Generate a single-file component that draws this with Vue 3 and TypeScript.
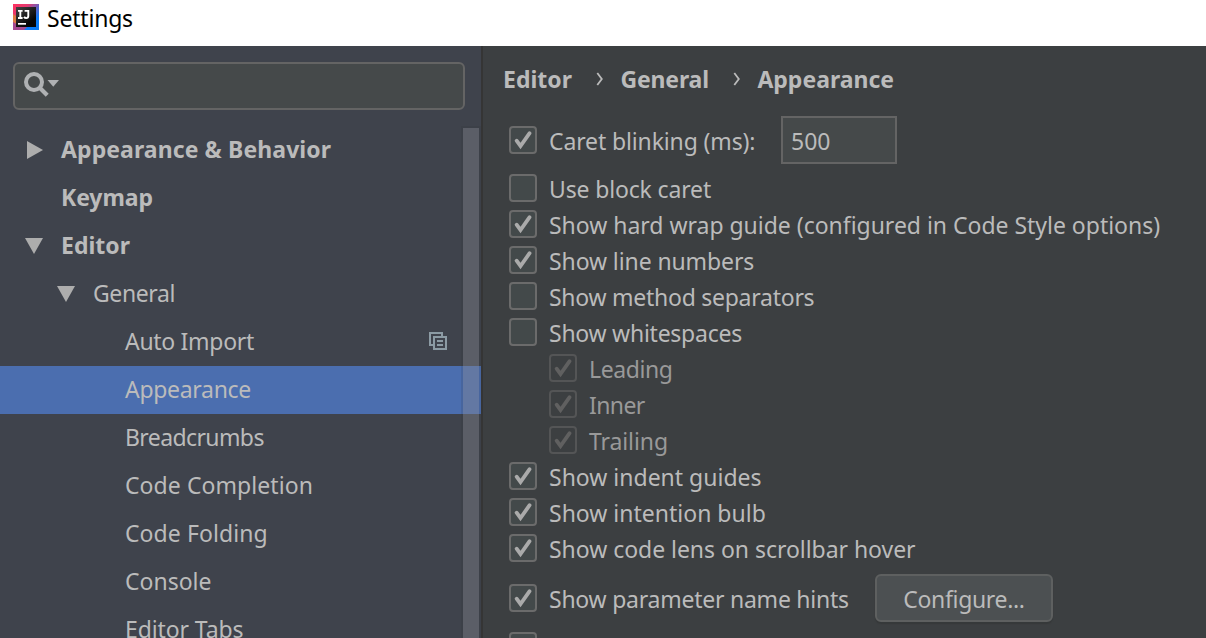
<script setup lang="ts">
interface TreeNode {
  label: string
  level: number
  kind?: 'open' | 'closed'
  selected?: boolean
  copyable?: boolean
  track?: number
}

interface Option {
  label: string
  checked?: boolean
  nested?: boolean
  track?: number
}

const tree: TreeNode[] = [
  { label: 'Appearance & Behavior', level: 0, kind: 'closed', track: 0.09 },
  { label: 'Keymap', level: 0, track: -0.1 },
  { label: 'Editor', level: 0, kind: 'open' },
  { label: 'General', level: 1, kind: 'open', track: -0.4 },
  { label: 'Auto Import', level: 2, copyable: true, track: -0.3 },
  { label: 'Appearance', level: 2, selected: true, track: -0.3 },
  { label: 'Breadcrumbs', level: 2, track: -0.6 },
  { label: 'Code Completion', level: 2, track: 0.07 },
  { label: 'Code Folding', level: 2, track: 0.08 },
  { label: 'Console', level: 2 },
  { label: 'Editor Tabs', level: 2, track: -0.1 },
]

const crumbs: { label: string; track?: number }[] = [
  { label: 'Editor' },
  { label: 'General', track: -0.15 },
  { label: 'Appearance' },
]

const options: Option[] = [
  { label: 'Use block caret', track: -0.15 },
  { label: 'Show hard wrap guide (configured in Code Style options)', checked: true, track: -0.02 },
  { label: 'Show line numbers', checked: true, track: -0.1 },
  { label: 'Show method separators', track: -0.26 },
  { label: 'Show whitespaces', track: -0.25 },
  { label: 'Leading', checked: true, nested: true, track: -0.4 },
  { label: 'Inner', checked: true, nested: true, track: -0.6 },
  { label: 'Trailing', checked: true, nested: true, track: -0.1 },
  { label: 'Show indent guides', checked: true },
  { label: 'Show intention bulb', checked: true },
  { label: 'Show code lens on scrollbar hover', checked: true, track: -0.04 },
]

const spacing = (value?: number) => ({ letterSpacing: `${value ?? 0}px` })
</script>

<template>
  <div class="window">
    <header class="titlebar">
      <svg class="logo" width="26" height="26" viewBox="0 0 26 26">
        <defs>
          <linearGradient id="frame" x1="0" y1="0" x2="1" y2="1">
            <stop offset="0" stop-color="#ff315f" />
            <stop offset="0.3" stop-color="#e5396f" />
            <stop offset="0.55" stop-color="#5b62c4" />
            <stop offset="0.75" stop-color="#087cfa" />
            <stop offset="1" stop-color="#0d7cf0" />
          </linearGradient>
          <linearGradient id="face" x1="0" y1="0" x2="0.8" y2="1">
            <stop offset="0" stop-color="#444" />
            <stop offset="0.8" stop-color="#050505" />
          </linearGradient>
        </defs>
        <rect width="26" height="26" fill="url(#frame)" />
        <path d="M0 10L3 12V20L0 18Z" fill="#dd7a43" />
        <path d="M0 18L3 20V23H14L11 26H0Z" fill="#a54a91" />
        <rect x="3" y="3" width="20" height="20" fill="url(#face)" />
        <path d="M5 6.9H9.6M7.3 6.9V14M5 14H9.6M11.6 6.9H15.3V12Q15.3 14.1 13.3 14.1Q11.8 14.1 11 12.9" fill="none" stroke="#fff" stroke-width="1.9" />
        <rect x="5" y="19" width="8" height="1.7" fill="#fff" />
      </svg>
      <span class="title">Settings</span>
    </header>

    <div class="body">
      <aside class="sidebar">
        <div class="search">
          <svg width="36" height="26" viewBox="0 0 36 26">
            <circle cx="10" cy="10" r="8" fill="none" stroke="#afb1b3" stroke-width="4" />
            <path d="M15.5 15.5L23.2 23.2" stroke="#afb1b3" stroke-width="4.2" />
            <path d="M23.5 8H35L29.25 14.8Z" fill="#afb1b3" />
          </svg>
        </div>
        <div class="tree">
          <div
            v-for="node in tree"
            :key="node.label + node.level"
            class="node"
            :class="['level-' + node.level, { selected: node.selected }]"
          >
            <span class="arrow">
              <svg v-if="node.kind === 'closed'" width="18" height="18" viewBox="0 0 18 18">
                <path d="M2 0L18 9L2 18Z" fill="#adadad" />
              </svg>
              <svg v-else-if="node.kind === 'open'" width="18" height="18" viewBox="0 0 18 18">
                <path d="M0 1H18L9 17Z" fill="#adadad" />
              </svg>
            </span>
            <span class="node-label" :style="spacing(node.track)">{{ node.label }}</span>
            <svg v-if="node.copyable" class="copy" width="18" height="18" viewBox="0 0 18 18">
              <path d="M5 13H1V1H13V4M5 5H17V17H5ZM8 9H14M8 13H14" fill="none" stroke="#8c9ba4" stroke-width="2" />
            </svg>
          </div>
          <div class="scrollbar"><div class="thumb"></div></div>
        </div>
      </aside>

      <main class="page">
        <nav class="crumbs">
          <template v-for="(crumb, i) in crumbs" :key="crumb.label">
            <svg v-if="i > 0" class="chevron" width="8" height="14" viewBox="0 0 8 14">
              <path d="M1.3 1L5.8 7L1.3 13" fill="none" stroke="#bbb" stroke-width="1.8" />
            </svg>
            <span :style="spacing(crumb.track)">{{ crumb.label }}</span>
          </template>
        </nav>

        <div class="row caret">
          <span class="box"><svg width="24" height="24" viewBox="0 0 24 24"><path d="M5.6 12.7L9.5 18L18.6 5.2" /></svg></span>
          <span class="text" :style="spacing(-0.13)">Caret blinking (ms):</span>
          <span class="input">500</span>
        </div>

        <div v-for="option in options" :key="option.label" class="row" :class="{ nested: option.nested }">
          <span class="box">
            <svg v-if="option.checked" width="24" height="24" viewBox="0 0 24 24"><path d="M5.6 12.7L9.5 18L18.6 5.2" /></svg>
          </span>
          <span class="text" :style="spacing(option.track)">{{ option.label }}</span>
        </div>

        <div class="row hints">
          <span class="box"><svg width="24" height="24" viewBox="0 0 24 24"><path d="M5.6 12.7L9.5 18L18.6 5.2" /></svg></span>
          <span class="text" :style="spacing(-0.24)">Show parameter name hints</span>
          <button class="configure">Configure...</button>
        </div>
        <div class="row last"><span class="box"></span></div>
      </main>
    </div>
  </div>
</template>

<style>
body {
  margin: 0;
  overflow: hidden;
}
</style>

<style scoped>
.window {
  width: 1206px;
  height: 638px;
  display: flex;
  flex-direction: column;
  overflow: hidden;
  font-family: 'Noto Sans', 'Open Sans', sans-serif;
  font-size: 23px;
  line-height: 32px;
  color: #bbb;
  white-space: nowrap;
}
.window svg {
  display: block;
  flex: none;
}
.titlebar {
  height: 46px;
  flex: none;
  display: flex;
  align-items: flex-start;
  background: #fff;
  color: #000;
  box-sizing: border-box;
  padding: 4px 0 0 13px;
  gap: 8px;
}
.title {
  margin-top: -2px;
  letter-spacing: -0.2px;
}
.body {
  flex: 1;
  min-height: 0;
  display: flex;
}
.sidebar {
  width: 481px;
  flex: none;
  box-sizing: content-box;
  background: #3f434c;
  border-right: 2px solid #353535;
  padding-top: 16px;
}
.search {
  box-sizing: border-box;
  width: 452px;
  height: 48px;
  margin-left: 13px;
  padding: 8px 9px;
  border: 2px solid #646464;
  border-radius: 6px;
  background: #45494a;
}
.tree {
  position: relative;
  margin-top: 16px;
}
.node {
  height: 48px;
  box-sizing: border-box;
  display: flex;
  align-items: center;
  padding-right: 34px;
}
.level-0 {
  padding-left: 25px;
  font-weight: 700;
}
.level-1 {
  padding-left: 57px;
}
.level-2 {
  padding-left: 89px;
}
.selected {
  background: #4b6eaf;
}
.arrow {
  width: 36px;
  flex: none;
}
.node-label {
  padding-bottom: 2px;
}
.copy {
  margin: -2px 0 0 auto;
}
.scrollbar {
  position: absolute;
  top: 0;
  left: 461px;
  width: 20px;
  height: 520px;
  box-sizing: border-box;
  padding: 2px 2px 0;
  background: rgba(50, 50, 50, 0.13);
}
.thumb {
  height: 518px;
  background: rgba(166, 166, 176, 0.3);
}
.page {
  flex: 1;
  background: #3c3f41;
  padding-left: 26px;
}
.crumbs {
  height: 66px;
  margin-left: -6px;
  display: flex;
  align-items: center;
  font-weight: 700;
}
.chevron {
  margin: 0 16.5px 0 24px;
}
.row {
  height: 36px;
  display: flex;
  align-items: center;
}
.nested {
  padding-left: 40px;
}
.box {
  width: 28px;
  height: 28px;
  box-sizing: border-box;
  flex: none;
  border: 2px solid #6b6b6b;
  border-radius: 4px;
  background: #43494a;
}
.box path {
  fill: none;
  stroke: #aaa;
  stroke-width: 3.8;
  stroke-linecap: round;
}
.text {
  margin-left: 12px;
  padding-top: 2px;
}
.nested .box {
  border-color: #545556;
  background: transparent;
}
.nested .box path {
  stroke: #606060;
}
.nested .text {
  color: #999;
}
.caret {
  height: 56px;
  padding-bottom: 2px;
}
.input {
  box-sizing: border-box;
  width: 116px;
  height: 48px;
  margin-left: auto;
  margin-right: 309px;
  padding: 7px 8px 0;
  border: 2px solid #646464;
  background: #45494a;
}
.hints {
  height: 64px;
}
.configure {
  box-sizing: border-box;
  width: 178px;
  height: 48px;
  margin-left: auto;
  margin-right: 153px;
  padding: 2px 0 0;
  border: 2px solid #5e6060;
  border-radius: 6px;
  background: #4c5052;
  box-shadow: 0 2px 1px #36393a;
  color: #bbb;
  font: inherit;
  letter-spacing: -0.33px;
}
.last {
  margin-top: -2px;
}
</style>
